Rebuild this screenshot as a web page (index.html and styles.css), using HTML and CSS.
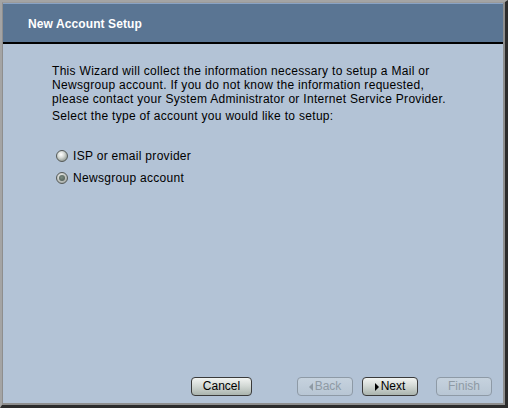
FILE: index.html
```html
<!DOCTYPE html>
<html>
<head>
<meta charset="utf-8">
<link rel="stylesheet" href="styles.css">
</head>
<body>
<div class="window">
  <div class="frame">
    <div class="header">
      <h1 class="title">New Account Setup</h1>
    </div>
    <div class="content">
      <p class="intro">This Wizard will collect the information necessary to setup a Mail or<br>Newsgroup account. If you do not know the information requested,<br>please contact your System Administrator or Internet Service Provider.</p>
      <p class="prompt">Select the type of account you would like to setup:</p>
      <div class="options">
        <label class="option"><span class="radio"></span>ISP or email provider</label>
        <label class="option"><span class="radio checked"></span>Newsgroup account</label>
      </div>
    </div>
    <div class="footer">
      <button class="btn cancel">Cancel</button>
      <button class="btn back disabled"><span class="arrow left"></span>Back</button>
      <button class="btn next"><span class="arrow right"></span>Next</button>
      <button class="btn finish disabled">Finish</button>
    </div>
  </div>
</div>
</body>
</html>
```
FILE: styles.css
```css
* { box-sizing: border-box; }
html, body { margin: 0; padding: 0; }
body {
  width: 508px;
  height: 408px;
  font-family: "Liberation Sans", Arial, sans-serif;
  font-size: 12px;
  color: #000;
  background: #2a2a2a;
}
.window {
  width: 508px;
  height: 408px;
  border-top: 2px solid #a4a4a4;
  border-left: 2px solid #a4a4a4;
  border-right: 3px solid #2c2c2c;
  border-bottom: 3px solid #2c2c2c;
  background: #b3c3d6;
}
.frame {
  height: 100%;
  display: flex;
  flex-direction: column;
  border-top: 1px solid #9a9a9a;
  border-left: 1px solid #8e8e8e;
  border-right: 2px solid #8e8e8e;
  border-bottom: 2px solid #8e8e8e;
  background: #b3c3d6;
}
.header {
  height: 41px;
  flex: none;
  background: #5a7593;
  border-top: 1px solid #8aa3c4;
  border-bottom: 2px solid #000;
  display: flex;
  align-items: center;
  padding-left: 25px;
}
.title {
  margin: 0;
  font-size: 12px;
  font-weight: bold;
  color: #fff;
  padding-top: 2px;
  letter-spacing: 0.1px;
}
.content {
  flex: 1;
  padding: 20px 20px 0 49px;
  letter-spacing: 0.3px;
}
.intro {
  margin: 0;
  line-height: 14px;
  white-space: nowrap;
}
.prompt {
  margin: 3px 0 0;
  line-height: 14px;
}
.options {
  margin-top: 26px;
  display: flex;
  flex-direction: column;
  gap: 8px;
}
.option {
  display: flex;
  align-items: center;
  height: 14px;
  line-height: 14px;
  padding-left: 4px;
}
.radio {
  width: 12px;
  height: 12px;
  border-radius: 50%;
  margin-right: 5px;
  background: radial-gradient(circle at 40% 35%, #ffffff 0%, #d8dcd8 35%, #8a928c 85%);
  border: 1px solid #555a58;
  position: relative;
}
.radio.checked {
  background: radial-gradient(circle at 40% 35%, #eef0ee 0%, #b8bcb8 60%, #8a908c 100%);
}
.radio.checked::after {
  content: "";
  position: absolute;
  left: 2px;
  top: 2px;
  width: 6px;
  height: 6px;
  border-radius: 50%;
  background: radial-gradient(circle at 45% 40%, #7a8a80 0%, #4a5650 100%);
}
.footer {
  flex: none;
  height: 27px;
  display: flex;
  align-items: flex-start;
  padding-left: 188px;
  padding-top: 1px;
}
.btn {
  height: 19px;
  width: 56px;
  padding: 0;
  border: 1px solid #3a3a3a;
  border-radius: 4px;
  font-family: "Liberation Sans", Arial, sans-serif;
  font-size: 12px;
  color: #000;
  background: linear-gradient(#f2f4f2, #d4dad6 45%, #aab4ae);
  display: flex;
  align-items: center;
  justify-content: center;
  line-height: 17px;
}
.btn.cancel { width: 61px; margin-right: 45px; }
.btn.back { margin-right: 9px; }
.btn.next { margin-right: 18px; }
.btn.disabled {
  border-color: #8e9aa6;
  color: #8e9aa4;
  background: linear-gradient(#c6d2de, #b8c6d4);
}
.arrow {
  width: 0;
  height: 0;
  border-top: 4px solid transparent;
  border-bottom: 4px solid transparent;
  margin-right: 2px;
}
.arrow.right { border-left: 4px solid #000; }
.arrow.left { border-right: 4px solid #8e9aa4; }
```
